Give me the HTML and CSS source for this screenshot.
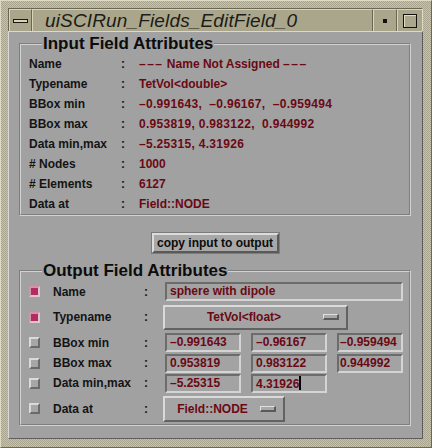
FILE: index.html
```html
<!DOCTYPE html>
<html>
<head>
<meta charset="utf-8">
<title>uiSCIRun_Fields_EditField_0</title>
<link rel="stylesheet" href="styles.css">
</head>
<body>
<div class="window">
  <div class="titlebar">
    <div class="menu-btn"><span class="bar"></span></div>
    <div class="title">uiSCIRun_Fields_EditField_0</div>
    <div class="win-btn min"><span class="dot"></span></div>
    <div class="win-btn max"><span class="box"></span></div>
  </div>
  <div class="content">
    <fieldset class="group group-in">
      <legend>Input Field Attributes</legend>
      <div class="in-grid">
        <span class="lbl">Name</span><span class="colon">:</span><span class="val"><span class="dashes">–––</span> Name Not Assigned <span class="dashes">–––</span></span>
        <span class="lbl">Typename</span><span class="colon">:</span><span class="val">TetVol&lt;double&gt;</span>
        <span class="lbl">BBox min</span><span class="colon">:</span><span class="val num">–0.991643, &nbsp;–0.96167, &nbsp;–0.959494</span>
        <span class="lbl">BBox max</span><span class="colon">:</span><span class="val num">0.953819, 0.983122, &nbsp;0.944992</span>
        <span class="lbl">Data min,max</span><span class="colon">:</span><span class="val num">–5.25315, 4.31926</span>
        <span class="lbl"># Nodes</span><span class="colon">:</span><span class="val">1000</span>
        <span class="lbl"># Elements</span><span class="colon">:</span><span class="val">6127</span>
        <span class="lbl">Data at</span><span class="colon">:</span><span class="val">Field::NODE</span>
      </div>
    </fieldset>
    <div class="btn-row"><button class="copy">copy input to output</button></div>
    <fieldset class="group group-out">
      <legend>Output Field Attributes</legend>
      <div class="out-grid">
        <span class="check on"></span><span class="lbl">Name</span><span class="colon">:</span>
        <div class="entry full">sphere with dipole</div>

        <span class="check on"></span><span class="lbl">Typename</span><span class="colon">:</span>
        <div class="menubtn type"><span class="mtext">TetVol&lt;float&gt;</span><span class="ind"></span></div>

        <span class="check"></span><span class="lbl">BBox min</span><span class="colon">:</span>
        <div class="triple"><div class="entry">–0.991643</div><div class="entry">–0.96167</div><div class="entry">–0.959494</div></div>

        <span class="check"></span><span class="lbl">BBox max</span><span class="colon">:</span>
        <div class="triple"><div class="entry">0.953819</div><div class="entry">0.983122</div><div class="entry">0.944992</div></div>

        <span class="check"></span><span class="lbl">Data min,max</span><span class="colon">:</span>
        <div class="triple"><div class="entry">–5.25315</div><div class="entry">4.31926<span class="caret"></span></div></div>

        <span class="check"></span><span class="lbl">Data at</span><span class="colon">:</span>
        <div class="menubtn dat"><span class="mtext">Field::NODE</span><span class="ind"></span></div>
      </div>
    </fieldset>
  </div>
</div>
</body>
</html>
```

FILE: styles.css
```css
* { box-sizing: border-box; }

html, body {
  margin: 0;
  padding: 0;
  background: #b4b09a;
}

.window {
  width: 432px;
  height: 448px;
  padding: 8px 8px 8px 8px;
  display: flex;
  flex-direction: column;
  background: repeating-conic-gradient(#c6c2aa 0 25%, #a9a58e 0 50%) 0 0 / 2px 2px;
  border-top: 1px solid #dedac4;
  border-left: 1px solid #dedac4;
  border-right: 1px solid #6a6754;
  border-bottom: 1px solid #6a6754;
}

.titlebar {
  height: 23px;
  display: flex;
  align-items: stretch;
  background: #aaa68c;
  border-top: 1px solid #6a6754;
  border-left: 1px solid #6a6754;
  border-right: 1px solid #dedac4;
  margin: -1px 0 0 -1px;
  font-family: "Liberation Sans", Arial, sans-serif;
}

.menu-btn {
  width: 23px;
  display: flex;
  align-items: center;
  justify-content: center;
  border-right: 1px solid #6a6754;
  border-top: 1px solid #d8d4bc;
  border-left: 1px solid #d8d4bc;
}

.menu-btn .bar {
  width: 15px;
  height: 4px;
  border: 1px solid #1a1a14;
  background: #d8d4bc;
}

.title {
  flex: 1;
  padding-left: 12px;
  font-style: italic;
  font-size: 19px;
  line-height: 22px;
  letter-spacing: 0.15px;
  color: #1c1c18;
  border-top: 1px solid #d8d4bc;
  border-left: 1px solid #d8d4bc;
  border-right: 1px solid #6a6754;
  white-space: nowrap;
  overflow: hidden;
}

.win-btn {
  display: flex;
  align-items: center;
  justify-content: center;
  border-top: 1px solid #d8d4bc;
  border-left: 1px solid #d8d4bc;
  border-right: 1px solid #6a6754;
}

.win-btn.min { width: 24px; }
.win-btn.max { width: 25px; border-right: none; }

.win-btn .dot {
  width: 4px;
  height: 4px;
  background: #111;
}

.win-btn .box {
  width: 14px;
  height: 14px;
  border: 1px solid #111;
  box-shadow: inset 1px 1px 0 #e0dcc6;
}

.content {
  flex: 1;
  background: #a1a1a1;
  padding: 2px 11px 0 10px;
  border-top: 1px solid #d8d8d8;
  border-left: 1px solid #d8d8d8;
  border-bottom: 1px solid #5e5e5e;
  border-right: 1px solid #5e5e5e;
  margin-left: -1px;
  font-family: "Liberation Sans", Arial, Helvetica, sans-serif;
  color: #111;
}

.group {
  margin: 0;
  padding: 0;
  min-width: 0;
  border: 2px groove #d2d2d2;
}

.group legend {
  margin-left: 21px;
  padding: 0 1px;
  font-size: 17px;
  font-weight: bold;
  line-height: 20px;
  color: #0c0c0c;
}

.lbl, .colon {
  font-size: 12px;
  font-weight: bold;
  color: #141414;
}

.val {
  font-size: 12px;
  font-weight: bold;
  color: #6a0914;
  white-space: nowrap;
}

.val.num {
  letter-spacing: 0.3px;
}

.dashes {
  letter-spacing: 1.5px;
}

.in-grid {
  display: grid;
  grid-template-columns: 92px 18px 1fr;
  grid-auto-rows: 20px;
  align-items: center;
  padding: 0 0 0 8px;
}

.btn-row {
  display: flex;
  justify-content: center;
  margin: 17px 0 8px 0;
}

.copy {
  width: 127px;
  height: 20px;
  margin: 0;
  padding: 0;
  font-family: "Liberation Sans", Arial, sans-serif;
  font-size: 12px;
  font-weight: bold;
  color: #0c0c0c;
  background: #a8a8a8;
  border-top: 2px solid #dcdcdc;
  border-left: 2px solid #dcdcdc;
  border-right: 2px solid #5a5a5a;
  border-bottom: 2px solid #5a5a5a;
  outline: 1px solid #7c7c7c;
}

.out-grid {
  display: grid;
  grid-template-columns: 24px 91px 19px 240px;
  grid-template-rows: 21px 30px 21px 20px 20px 31px;
  align-items: center;
  padding: 0 0 0 8px;
}

.check {
  width: 11px;
  height: 11px;
  background: #a6a6a6;
  border-top: 2px solid #dadada;
  border-left: 2px solid #dadada;
  border-right: 2px solid #6a6a6a;
  border-bottom: 2px solid #6a6a6a;
}

.check.on {
  background: #b02c62;
  border-top-color: #d890ac;
  border-left-color: #d890ac;
  border-right-color: #e0c4cc;
  border-bottom-color: #e0c4cc;
}

.entry {
  height: 19px;
  margin-left: 2px;
  padding-left: 3px;
  font-size: 12px;
  font-weight: bold;
  line-height: 15px;
  color: #6a0914;
  background: #a3a3a3;
  border-top: 2px solid #6c6c6c;
  border-left: 2px solid #6c6c6c;
  border-right: 2px solid #d4d4d4;
  border-bottom: 2px solid #d4d4d4;
  white-space: nowrap;
  overflow: hidden;
}

.entry.full {
  width: 238px;
}

.triple {
  display: grid;
  grid-template-columns: 78px 76px 66px;
  column-gap: 10px;
}

.triple .entry:nth-child(n+2) { margin-left: 0; }
.triple .entry:nth-child(3) { padding-left: 1px; }

.caret {
  display: inline-block;
  width: 2px;
  height: 14px;
  background: #000;
  vertical-align: -2px;
}

.menubtn {
  display: flex;
  align-items: center;
  font-size: 12px;
  font-weight: bold;
  color: #6a0914;
  background: #a4a4a4;
  border-top: 2px solid #dadada;
  border-left: 2px solid #dadada;
  border-right: 2px solid #626262;
  border-bottom: 2px solid #626262;
}

.menubtn.type { width: 185px; height: 25px; }
.menubtn.dat { width: 122px; height: 26px; }

.mtext {
  flex: 1;
  text-align: center;
  white-space: nowrap;
}

.ind {
  width: 16px;
  height: 6px;
  background: #a8a8a8;
  border-top: 1px solid #e0e0e0;
  border-left: 1px solid #e0e0e0;
  border-right: 2px solid #5a5a5a;
  border-bottom: 2px solid #5a5a5a;
  margin-right: 7px;
}
```
